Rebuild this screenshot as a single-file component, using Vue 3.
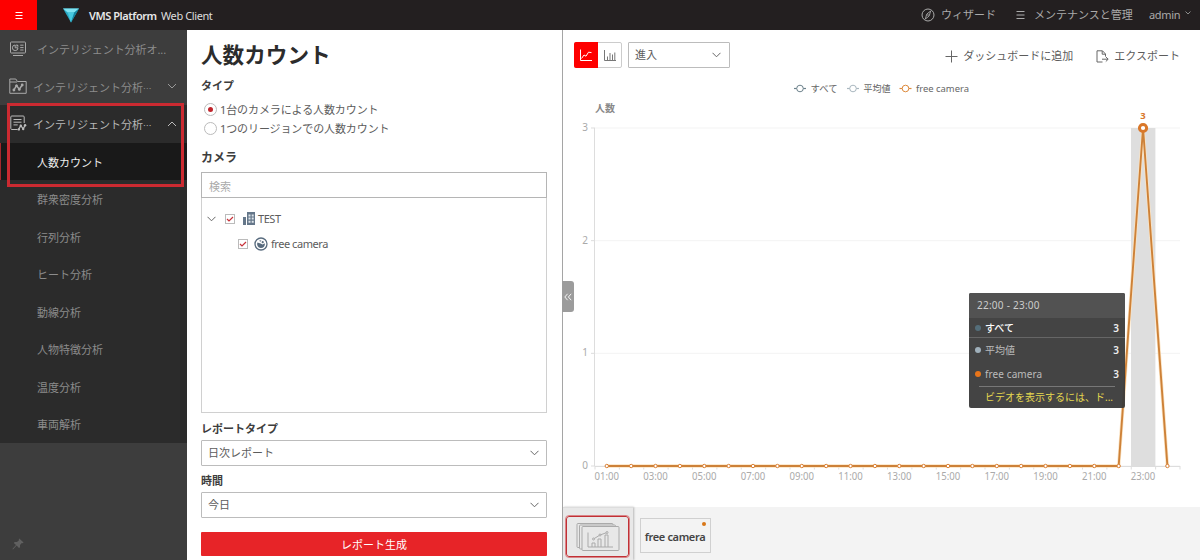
<template>
    <div class="page">
        <header class="topbar">
            <button class="menu-btn">
                <svg width="10" height="10" viewBox="0 0 10 10"><path d="M1.5 1.5h7M1.5 4.5h7M1.5 7.5h7" stroke="#fff" stroke-width="1" /></svg>
            </button>
            <svg class="logo" width="16" height="15" viewBox="0 0 16 15">
                <path d="M0 0.5H16L8 14.5Z" fill="#2aa9c4" />
                <path d="M0 0.5H16L11.3 4.5H4.7Z" fill="#7fe3f2" />
                <path d="M4.7 4.5H11.3L8 14.5Z" fill="#46c9e0" />
                <path d="M16 0.5L11.3 4.5L8 14.5Z" fill="#16849f" />
            </svg>
            <span class="brand">VMS Platform</span>
            <span class="client">Web Client</span>
            <div class="top-links">
                <svg width="14" height="14" viewBox="0 0 14 14" fill="none" stroke="#aaa">
                    <circle cx="7" cy="7" r="6" />
                    <path d="M9.6 3L8.3 7.8L4.4 11L5.7 6.2Z" stroke-width="0.9" />
                    <circle cx="7" cy="7" r="0.8" fill="#aaa" stroke="none" />
                </svg>
                <span class="wizard">ウィザード</span>
                <svg width="9" height="10" viewBox="0 0 9 10"><path d="M0.5 1.5h8M0.5 5h8M0.5 8.5h8" stroke="#aaa" /></svg>
                <span class="maintenance">メンテナンスと管理</span>
                <span class="admin">admin</span>
                <svg class="admin-arrow" width="6" height="4" viewBox="0 0 6 4"><path d="M0.5 0.5L3 3L5.5 0.5" fill="none" stroke="#999" stroke-width="0.9" /></svg>
            </div>
        </header>

        <div class="main">
            <nav class="sidebar">
                <div class="nav-item first">
                    <svg width="18" height="16" viewBox="0 0 18 16" fill="none" stroke="#aaa">
                        <rect x="1.5" y="1" width="15" height="11" rx="0.8" />
                        <path d="M4 14.5h10" />
                        <path d="M6.2 4a2.8 2.8 0 1 0 2.8 2.8H6.2Z" />
                        <path d="M7.4 3.2a2.5 2.5 0 0 1 2.3 2.4h-2.3Z" fill="#aaa" stroke="none" />
                        <path d="M11.2 4.2h3.3M11.2 6.6h3.3M11.2 9h3.3" />
                    </svg>
                    <span>インテリジェント分析オ...</span>
                </div>
                <div class="nav-item">
                    <svg width="18" height="17" viewBox="0 0 18 17" fill="none" stroke="#aaa">
                        <path d="M0.8 15.3V1h6l1.6 2.5h8.8v11.8Z" />
                        <path d="M1 4h7" />
                        <path d="M4.8 12.2L7.5 7.6L10.3 11.2L13.2 7" stroke-width="1.4" />
                        <g fill="#aaa" stroke="none"><circle cx="4.9" cy="12" r="1.4" /><circle cx="7.5" cy="7.8" r="1.4" /><circle cx="10.3" cy="11.4" r="1.4" /><circle cx="13.2" cy="7" r="1.4" /></g>
                    </svg>
                    <span>インテリジェント分析<i class="dots">…</i></span>
                    <svg class="arrow" width="10" height="6" viewBox="0 0 10 6"><path d="M1 1L5 5L9 1" fill="none" stroke="#999" /></svg>
                </div>
                <div class="nav-item open">
                    <svg width="18" height="17" viewBox="0 0 18 17" fill="none" stroke="#bbb">
                        <path d="M8.5 14.5H2.8a1 1 0 0 1-1-1V2a1 1 0 0 1 1-1h11.4a1 1 0 0 1 1 1v6" />
                        <path d="M4.5 4.5h8M4.5 7.2h8M4.5 9.9h4.2" />
                        <path d="M9.6 14.4L11.8 10.6L14.2 13.9L16.2 10.2" stroke-width="1.3" />
                        <g fill="#bbb" stroke="none"><circle cx="9.8" cy="14.4" r="1.2" /><circle cx="11.8" cy="10.8" r="1.2" /><circle cx="14.2" cy="14" r="1.2" /><circle cx="16.1" cy="10.3" r="1.2" /></g>
                    </svg>
                    <span>インテリジェント分析<i class="dots">…</i></span>
                    <svg class="arrow" width="10" height="6" viewBox="0 0 10 6"><path d="M1 5L5 1L9 5" fill="none" stroke="#bbb" /></svg>
                </div>
                <ul class="sub-nav">
                    <li v-for="item in subItems" :key="item" :class="{ active: item === activeItem }">{{ item }}</li>
                </ul>
                <svg class="pin" width="12" height="12" viewBox="0 0 12 12" fill="#606060">
                    <path d="M7.2 0.4L11.6 4.6L10.6 5.2L9.8 5L8 7L8 9.2L7 10L4.6 7.6L1 11.4L0.4 11L4 7.1L1.8 4.9L2.7 4L5 4.1L7 2.2L6.8 1.2Z" />
                </svg>
                <div class="highlight"></div>
            </nav>

            <section class="filters">
                <h1>人数カウント</h1>
                <h2 class="type-label">タイプ</h2>
                <label v-for="(type, index) in types" :key="type" class="radio-row">
                    <span class="radio" :class="{ checked: index === selectedType }"></span>{{ type }}
                </label>
                <h2 class="camera-label">カメラ</h2>
                <div class="search">検索</div>
                <div class="tree">
                    <div class="tree-row">
                        <svg class="tree-arrow" width="9" height="6" viewBox="0 0 9 6"><path d="M0.5 0.8L4.5 4.8L8.5 0.8" fill="none" stroke="#666" /></svg>
                        <span class="check"><svg width="8" height="8" viewBox="0 0 8 8"><path d="M1 4L3 6L7 2" fill="none" stroke="#c8323a" stroke-width="1.2" /></svg></span>
                        <svg class="building" width="12" height="13" viewBox="0 0 12 13">
                            <path d="M0 5H3V13H0ZM4 0H12V13H4Z" fill="#65778a" />
                            <path d="M5.5 2.5h2v2h-2ZM8.7 2.5h2v2h-2ZM5.5 5.6h2v2h-2ZM8.7 5.6h2v2h-2ZM5.5 8.7h2v2h-2ZM8.7 8.7h2v2h-2Z" fill="#dfe5ea" />
                        </svg>
                        <span>TEST</span>
                    </div>
                    <div class="tree-row child">
                        <span class="check"><svg width="8" height="8" viewBox="0 0 8 8"><path d="M1 4L3 6L7 2" fill="none" stroke="#c8323a" stroke-width="1.2" /></svg></span>
                        <svg class="camera" width="14" height="14" viewBox="0 0 14 14">
                            <circle cx="7" cy="7" r="6" fill="#fff" stroke="#586b7e" stroke-width="1.3" />
                            <path d="M3.4 5.6A3.9 3.9 0 1 0 10.8 6.2L8.6 7.4L6.6 6.4Z" fill="#586b7e" />
                            <path d="M5 3.8A3.8 3.8 0 0 1 7.4 3.2L6.6 4.8Z" fill="#586b7e" />
                            <circle cx="8.7" cy="5.2" r="1.1" fill="#586b7e" />
                        </svg>
                        <span>free camera</span>
                    </div>
                </div>
                <h2 class="report-label">レポートタイプ</h2>
                <div class="select">日次レポート<svg width="9" height="6" viewBox="0 0 9 6"><path d="M0.5 0.8L4.5 4.8L8.5 0.8" fill="none" stroke="#666" /></svg></div>
                <h2 class="time-label">時間</h2>
                <div class="select">今日<svg width="9" height="6" viewBox="0 0 9 6"><path d="M0.5 0.8L4.5 4.8L8.5 0.8" fill="none" stroke="#666" /></svg></div>
                <button class="generate">レポート生成</button>
            </section>

            <section class="report">
                <div class="collapse">
                    <svg width="8" height="8" viewBox="0 0 8 8"><path d="M3.6 0.8L0.8 4L3.6 7.2M7.2 0.8L4.4 4L7.2 7.2" fill="none" stroke="#fff" stroke-width="0.9" /></svg>
                </div>
                <div class="toolbar">
                    <div class="toggle">
                        <span class="on"><svg width="14" height="13" viewBox="0 0 14 13" fill="none" stroke="#fff"><path d="M1.5 0.5V11.5H13" /><path d="M2.5 9.5L5 6L7 7.2L9.5 3.2L12.5 3.6" /></svg></span>
                        <span><svg width="14" height="13" viewBox="0 0 14 13" fill="none" stroke="#777"><path d="M1.5 1V11.5H13" /><path d="M4.5 11V7.5M7 11V4M9.5 11V5.5M11.8 11V3.5" /></svg></span>
                    </div>
                    <div class="select direction">進入<svg width="9" height="6" viewBox="0 0 9 6"><path d="M0.5 0.8L4.5 4.8L8.5 0.8" fill="none" stroke="#666" /></svg></div>
                    <div class="actions">
                        <svg width="13" height="13" viewBox="0 0 13 13"><path d="M6.5 0.5V12.5M0.5 6.5H12.5" stroke="#666" /></svg>
                        <span class="add">ダッシュボードに追加</span>
                        <svg width="13" height="13" viewBox="0 0 13 13" fill="none" stroke="#666"><path d="M6.5 12H1V0.8H6.5L9.5 4V6.5" /><path d="M6.2 1V4.2H9.3" /><path d="M6 9.2H12M9.8 6.9L12.2 9.2L9.8 11.5" /></svg>
                        <span class="export">エクスポート</span>
                    </div>
                </div>

                <div class="chart">
                    <svg width="637" height="431" viewBox="563 76 637 431">
                        <g class="legend">
                            <g v-for="item in legend" :key="item.name" :stroke="item.color">
                                <path :d="`M${item.x} 88.5h12`" stroke-width="1.2" />
                                <circle :cx="item.x + 6" cy="88.5" r="3.3" fill="#fff" />
                                <text :x="item.x + 16.5" y="91.5" :textLength="item.width" lengthAdjust="spacingAndGlyphs" stroke="none">{{ item.name }}</text>
                            </g>
                        </g>
                        <text class="axis-title" x="595" y="112">人数</text>
                        <g v-for="tick in 4" :key="tick">
                            <path :d="`M595 ${yPos(tick - 1)}H1180`" stroke="#f3f3f3" />
                            <path :d="`M591 ${yPos(tick - 1)}h4`" stroke="#ddd" />
                            <text class="axis-text" x="588" :y="yPos(tick - 1) + 3" text-anchor="end">{{ tick - 1 }}</text>
                        </g>
                        <path d="M594.5 128V466M595 466.5H1180" stroke="#ddd" />
                        <path v-for="n in 25" :key="n" :d="`M${595 + (n - 1) * step} 466v3.5`" stroke="#ddd" />
                        <rect x="1131" y="128" width="24.4" height="338" fill="#dedede" />
                        <path :d="linePath" fill="none" stroke="#fbe3c2" stroke-width="3.4" />
                        <path :d="linePath" fill="none" stroke="#cd8138" stroke-width="1.9" />
                        <g v-for="(value, index) in values" :key="index">
                            <circle v-if="value" :cx="xPos(index)" :cy="yPos(value)" r="3.6" fill="#fff" stroke="#d9782a" stroke-width="3" />
                            <circle v-else :cx="xPos(index)" :cy="yPos(value)" r="1.7" fill="#fff" stroke="#da8136" />
                            <text v-if="index % 2 === 0" class="axis-text" :x="xPos(index)" y="480" text-anchor="middle" textLength="24.5" lengthAdjust="spacingAndGlyphs">{{ hour(index + 1) }}</text>
                        </g>
                        <text class="peak" x="1143" y="118.5" text-anchor="middle">3</text>
                    </svg>
                    <div class="tooltip">
                        <div class="tip-title">22:00 - 23:00</div>
                        <div class="tip-row total"><i class="dot"></i>すべて<b>3</b></div>
                        <div class="tip-row"><i class="dot average"></i>平均値<b>3</b></div>
                        <div class="tip-row"><i class="dot camera-dot"></i><span class="tip-camera">free camera</span><b>3</b></div>
                        <div class="tip-note">ビデオを表示するには、ド...</div>
                    </div>
                </div>

                <footer class="thumbs">
                    <div class="all-thumb">
                        <div class="thumb-frame">
                            <svg width="44" height="30" viewBox="0 0 44 30" fill="#e8e8e8" stroke="#aaa">
                                <rect x="1" y="1.5" width="36" height="24" rx="1" />
                                <rect x="3.5" y="3" width="36" height="24" rx="1" />
                                <rect x="6" y="4.5" width="37" height="24" rx="1" />
                                <path d="M12 10.5V25H37" fill="none" />
                                <path d="M16 25v-4h3v4M22 25v-8h3v8M29 25V13h3v12" fill="none" />
                                <path d="M17.5 17L24 13L31 10.5" fill="none" />
                                <circle cx="17.5" cy="17" r="1" /><circle cx="24" cy="13" r="1" /><circle cx="31" cy="10.5" r="1" />
                            </svg>
                        </div>
                    </div>
                    <div class="camera-thumb">free camera<i></i></div>
                </footer>
            </section>
        </div>
    </div>
</template>

<script setup>
import { ref, computed } from 'vue';

const subItems = ['人数カウント', '群衆密度分析', '行列分析', 'ヒート分析', '動線分析', '人物特徴分析', '温度分析', '車両解析'];
const activeItem = ref('人数カウント');

const types = ['1台のカメラによる人数カウント', '1つのリージョンでの人数カウント'];
const selectedType = ref(0);

const legend = [
    { name: 'すべて', color: '#6d828c', x: 794, width: 27 },
    { name: '平均値', color: '#a9b7bf', x: 847, width: 27 },
    { name: 'free camera', color: '#dd8a3c', x: 899.5, width: 53 }
];

const values = ref([...Array(22).fill(0), 3, 0]);
const step = 585 / 24;

const xPos = (index) => 594.6 + (index + 0.5) * step;
const yPos = (value) => 466 - value * 112.67;
const hour = (n) => `${String(n).padStart(2, '0')}:00`;

const linePath = computed(() => 'M' + values.value.map((value, index) => `${xPos(index)} ${yPos(value)}`).join('L'));
</script>

<style>
body {
    margin: 0;
    overflow: hidden;
}
</style>

<style scoped>
.page {
    height: 560px;
    display: flex;
    flex-direction: column;
    font-family: "Noto Sans", "Noto Sans CJK JP", sans-serif;
    font-size: 11px;
    line-height: 16px;
    color: #5c5c5c;
    background: #fff;
    white-space: nowrap;
}

.page * {
    box-sizing: border-box;
}

svg {
    flex: none;
    display: block;
}

button {
    border: 0;
    padding: 0;
    font: inherit;
}

.topbar {
    height: 30px;
    flex: none;
    display: flex;
    align-items: center;
    background: #231f20;
    color: #aaa;
}

.menu-btn {
    width: 37px;
    height: 30px;
    display: flex;
    align-items: center;
    justify-content: center;
    padding-top: 2px;
    background: #fe0000;
}

.logo {
    margin: 1px 10px 0 26px;
}

.brand {
    width: 72px;
    margin-top: 2px;
    color: #e8e8e8;
    font-weight: 600;
    letter-spacing: -0.45px;
}

.client {
    margin-top: 2px;
    color: #ddd;
    letter-spacing: -0.4px;
}

.top-links {
    margin-left: auto;
    display: flex;
    align-items: center;
}

.wizard {
    width: 75px;
    margin-left: 6px;
}

.maintenance {
    width: 115px;
    margin-left: 9px;
}

.admin {
    width: 36px;
    letter-spacing: -0.3px;
}

.admin-arrow {
    margin: -5px 9px 0 0;
}

.main {
    flex: 1;
    display: flex;
    min-height: 0;
}

.sidebar {
    position: relative;
    width: 187px;
    flex: none;
    display: flex;
    flex-direction: column;
    background: #3d3d3d;
    color: #8c8c8c;
}

.nav-item {
    height: 37.5px;
    display: flex;
    align-items: center;
    gap: 7px;
    padding: 0 10px 0 9px;
}

.nav-item.first {
    gap: 10px;
}

.nav-item.first span {
    letter-spacing: -0.05px;
}

.nav-item > svg:first-child {
    margin-top: 0;
}

.nav-item span {
    margin-top: 3px;
}

.nav-item:not(.first) span {
    margin-left: -1px;
}

.dots {
    font-family: "Noto Sans CJK JP", sans-serif;
    font-size: 8.5px;
    font-style: normal;
}

.arrow {
    margin-left: auto;
}

.nav-item.open {
    background: #2b2b2b;
    color: #b8b8b8;
}

.sub-nav {
    margin: 0;
    padding: 0;
    list-style: none;
    background: #2b2b2b;
}

.sub-nav li {
    height: 37.5px;
    padding-left: 37px;
    line-height: 39px;
}

.sub-nav .active {
    border-left: 1px solid #a3282c;
    padding-left: 36px;
    background: #191919;
    color: #eee;
}

.pin {
    margin: auto 0 10px 12px;
}

.highlight {
    position: absolute;
    left: 7px;
    top: 73px;
    width: 177px;
    height: 84px;
    border: 3px solid #cb2a31;
}

.filters {
    width: 375px;
    flex: none;
    padding: 10px 15px 0 14px;
}

h1 {
    margin: 0;
    font-size: 21.6px;
    line-height: 30px;
    color: #2c2c2c;
}

h2 {
    margin: 0;
    font-size: 11px;
    line-height: 16px;
    color: #3d3d3d;
}

.type-label {
    margin: 8px 0 6px;
}

.radio-row {
    height: 19px;
    display: flex;
    align-items: center;
    gap: 3px;
    padding-left: 3px;
    letter-spacing: -0.1px;
}

.radio {
    width: 13px;
    height: 13px;
    display: flex;
    align-items: center;
    justify-content: center;
    border: 1px solid #bbb;
    border-radius: 50%;
}

.radio.checked::after {
    content: "";
    width: 5px;
    height: 5px;
    border-radius: 50%;
    background: #c0252c;
}

.camera-label {
    margin: 12px 0 6px;
    font-size: 12px;
}

.search {
    height: 26px;
    padding-left: 7px;
    line-height: 27px;
    border: 1px solid #b5b5b5;
    color: #aaa;
}

.tree {
    height: 215px;
    padding-top: 8px;
    border: 1px solid #d0d0d0;
    border-top: 0;
}

.tree-row {
    height: 25.5px;
    display: flex;
    align-items: center;
    padding-left: 5px;
    letter-spacing: -0.45px;
}

.tree-row.child {
    padding-left: 36px;
}

.check {
    width: 10px;
    height: 10px;
    display: flex;
    align-items: center;
    justify-content: center;
    border: 1px solid #bbb;
}

.tree-arrow {
    margin-right: 9px;
}

.building {
    margin: 0 3px 0 8px;
}

.camera {
    margin: 0 3px 0 6px;
}

.report-label {
    margin: 8px 0 3px;
}

.select {
    height: 26px;
    display: flex;
    align-items: center;
    justify-content: space-between;
    padding: 0 7px 0 6px;
    border: 1px solid #bcbcbc;
    border-radius: 1px;
}

.time-label {
    margin: 7px 0 3px;
}

.generate {
    width: 346px;
    height: 24px;
    margin-top: 14px;
    padding-top: 2px;
    background: #e72428;
    border-radius: 1px;
    color: #fff;
}

.report {
    position: relative;
    flex: 1;
    min-width: 0;
    display: flex;
    flex-direction: column;
    border-left: 1px solid #a5a5a5;
}

.collapse {
    position: absolute;
    left: -1px;
    top: 251px;
    width: 12px;
    height: 31px;
    display: flex;
    align-items: center;
    justify-content: center;
    background: #9c9c9c;
    border-radius: 0 3px 3px 0;
}

.toolbar {
    height: 46px;
    flex: none;
    display: flex;
    align-items: center;
    padding: 4px 20px 0 11px;
}

.toggle {
    width: 48px;
    height: 26px;
    display: flex;
    border: 1px solid #ccc;
    border-radius: 2px;
}

.toggle span {
    width: 23px;
    display: flex;
    align-items: center;
    justify-content: center;
}

.toggle .on {
    width: 25px;
    margin: -1px 0 -1px -1px;
    background: #fe0000;
    border-radius: 2px 0 0 2px;
}

.direction {
    width: 102px;
    margin-left: 6px;
    padding-right: 8px;
}

.actions {
    margin-left: auto;
    display: flex;
    align-items: center;
    padding-top: 2px;
}

.add {
    width: 133px;
    margin-left: 5px;
}

.export {
    margin-left: 5px;
}

.chart {
    position: relative;
    height: 431px;
    flex: none;
}

.legend text {
    font-size: 9.5px;
    fill: #666;
}

.axis-title {
    font-size: 10px;
    font-weight: 600;
    fill: #888;
}

.axis-text {
    font-size: 10px;
    fill: #aaa;
}

.peak {
    font-size: 9.5px;
    font-weight: 700;
    fill: #d9782a;
}

.tooltip {
    position: absolute;
    left: 406px;
    top: 217px;
    width: 156px;
    height: 115px;
    border-radius: 2px;
    overflow: hidden;
    background: rgba(58, 58, 58, 0.95);
    color: #bbb;
    font-size: 10px;
}

.tip-title {
    height: 25px;
    padding-left: 8px;
    background: #525252;
    color: #ccc;
    letter-spacing: 0.25px;
    line-height: 25px;
}

.tip-row {
    height: 24px;
    display: flex;
    align-items: center;
    padding: 0 6px;
}

.tip-row.total {
    height: 20px;
    border-bottom: 1px solid #666;
    color: #fff;
    font-weight: 500;
}

.tip-row b {
    margin-left: auto;
    color: #eee;
    font-weight: 600;
}

.tip-camera {
    letter-spacing: 0.1px;
}

.dot {
    width: 6px;
    height: 6px;
    margin-right: 4px;
    border-radius: 50%;
    background: #546e7a;
}

.dot.average {
    background: #a0b0bb;
}

.dot.camera-dot {
    background: #e8751a;
}

.tip-note {
    margin: 0 10px;
    padding-left: 6px;
    border-top: 1px solid #777;
    color: #e5d850;
    line-height: 20px;
}

.thumbs {
    flex: 1;
    display: flex;
    background: #f3f3f3;
}

.all-thumb {
    width: 70px;
    padding: 8px 0 0 3px;
    border-top: 1px solid #ddd;
    background: #e8e8e8;
    box-shadow: 1px 0 2px rgba(0, 0, 0, 0.25);
}

.thumb-frame {
    width: 63px;
    height: 41px;
    display: flex;
    align-items: center;
    justify-content: center;
    border: 1.5px solid #c13035;
    outline: 0.5px solid #d98588;
    border-radius: 3px;
}

.camera-thumb {
    position: relative;
    width: 71px;
    height: 35px;
    margin: 11px 0 0 7px;
    padding-right: 1px;
    border: 1px solid #d0d0d0;
    line-height: 36px;
    text-align: center;
    color: #444;
    font-weight: 600;
    letter-spacing: -0.35px;
}

.camera-thumb i {
    position: absolute;
    top: 3px;
    right: 4px;
    width: 4px;
    height: 4px;
    border-radius: 50%;
    background: #d87718;
}
</style>
